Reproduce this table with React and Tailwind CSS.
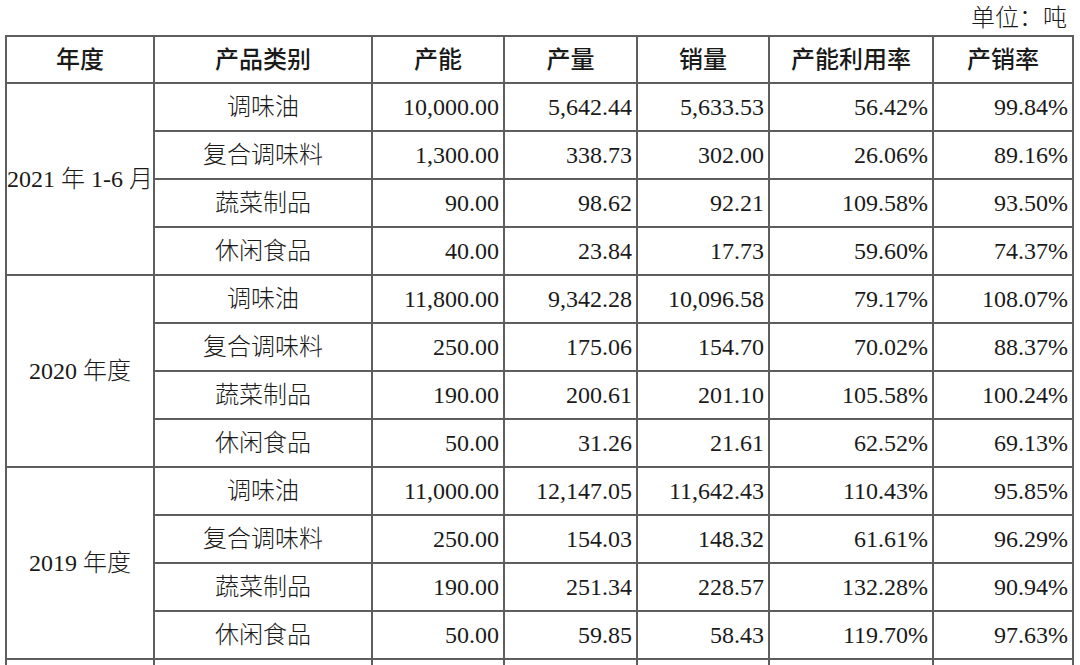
import React from "react";

const sections = [
  {
    year: "2021 年 1-6 月",
    rows: [
      ["调味油", "10,000.00", "5,642.44", "5,633.53", "56.42%", "99.84%"],
      ["复合调味料", "1,300.00", "338.73", "302.00", "26.06%", "89.16%"],
      ["蔬菜制品", "90.00", "98.62", "92.21", "109.58%", "93.50%"],
      ["休闲食品", "40.00", "23.84", "17.73", "59.60%", "74.37%"],
    ],
  },
  {
    year: "2020 年度",
    rows: [
      ["调味油", "11,800.00", "9,342.28", "10,096.58", "79.17%", "108.07%"],
      ["复合调味料", "250.00", "175.06", "154.70", "70.02%", "88.37%"],
      ["蔬菜制品", "190.00", "200.61", "201.10", "105.58%", "100.24%"],
      ["休闲食品", "50.00", "31.26", "21.61", "62.52%", "69.13%"],
    ],
  },
  {
    year: "2019 年度",
    rows: [
      ["调味油", "11,000.00", "12,147.05", "11,642.43", "110.43%", "95.85%"],
      ["复合调味料", "250.00", "154.03", "148.32", "61.61%", "96.29%"],
      ["蔬菜制品", "190.00", "251.34", "228.57", "132.28%", "90.94%"],
      ["休闲食品", "50.00", "59.85", "58.43", "119.70%", "97.63%"],
    ],
  },
];

const headers = ["年度", "产品类别", "产能", "产量", "销量", "产能利用率", "产销率"];
const widths = ["w-[148px]", "w-[218px]", "w-[132px]", "w-[133px]", "w-[132px]", "w-[164px]", "w-[140px]"];

const cell = "border-2 border-[#5e5e5e] p-0";

export default function App() {
  return (
    <div
      className="w-[1080px] h-[665px] overflow-hidden bg-white text-[#1a1a1a]"
      style={{ fontFamily: '"Liberation Serif", "Noto Sans CJK SC", serif' }}
    >
      <div className="w-[1072px] h-[35px] flex items-center justify-end pr-[5px] text-[24px] leading-none font-light">
        单位：吨
      </div>
      <table className="ml-[5px] w-[1067px] table-fixed border-collapse text-[24px] leading-none">
        <colgroup>
          {widths.map((w, i) => (
            <col key={i} className={w} />
          ))}
        </colgroup>
        <thead>
          <tr className="h-[47px]">
            {headers.map((h) => (
              <th key={h} className={`${cell} text-center font-medium`}>
                {h}
              </th>
            ))}
          </tr>
        </thead>
        <tbody className="font-light">
          {sections.map((s) =>
            s.rows.map((r, ri) => (
              <tr key={s.year + ri} className="h-[48px]">
                {ri === 0 && (
                  <td rowSpan={4} className={`${cell} text-center whitespace-nowrap`}>
                    {s.year}
                  </td>
                )}
                <td className={`${cell} text-center`}>{r[0]}</td>
                {r.slice(1).map((v, vi) => (
                  <td key={vi} className={`${cell} text-right pr-[4px]`}>
                    {v}
                  </td>
                ))}
              </tr>
            ))
          )}
          <tr className="h-[48px]">
            {headers.map((h) => (
              <td key={h} className={cell}></td>
            ))}
          </tr>
        </tbody>
      </table>
    </div>
  );
}
